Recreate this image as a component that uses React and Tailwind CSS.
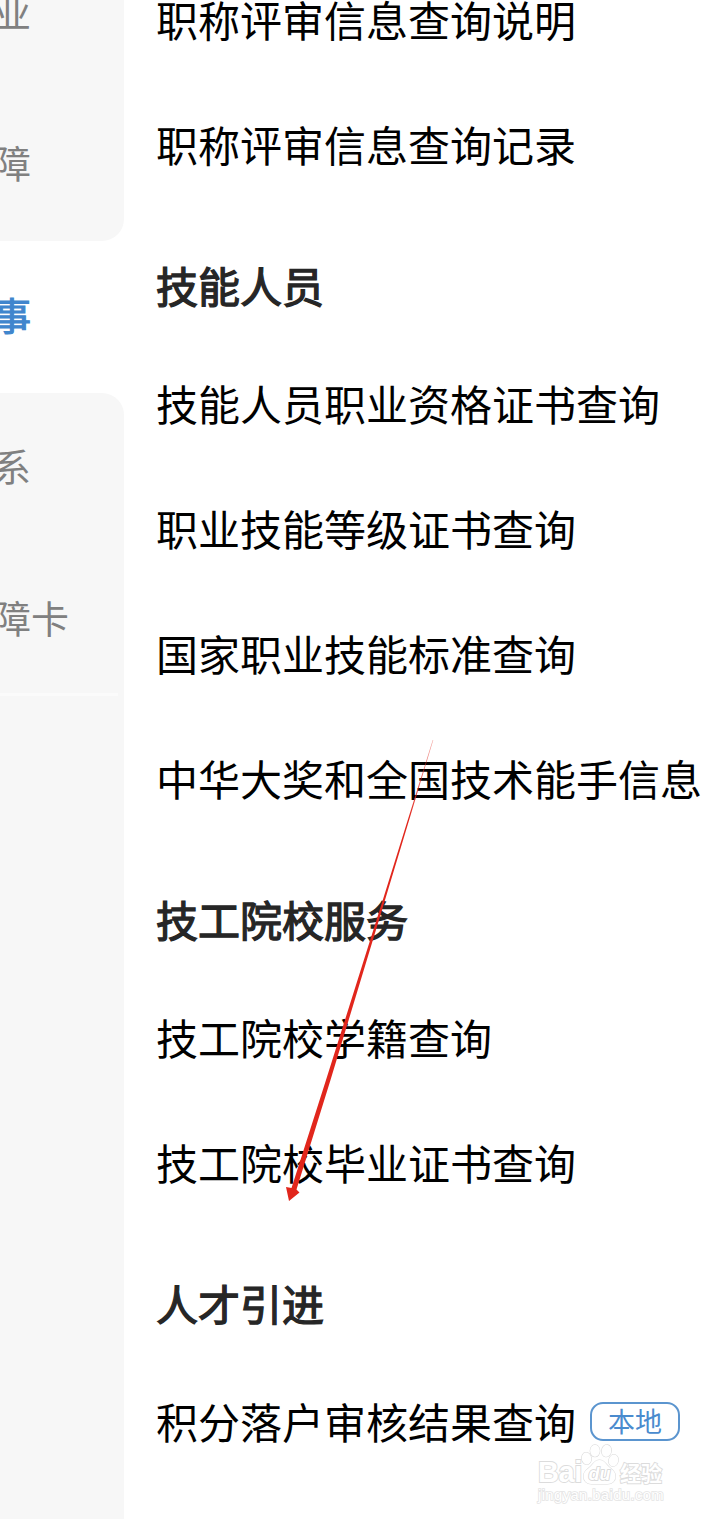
import React from 'react';

const tabsAbove = ["业", "障"];
const tabsBelow = ["系", "障卡"];

const sections = [
  {
    id: 1,
    title: null,
    items: ["职称评审信息查询说明", "职称评审信息查询记录"],
  },
  {
    id: 2,
    title: "技能人员",
    items: ["技能人员职业资格证书查询", "职业技能等级证书查询", "国家职业技能标准查询", "中华大奖和全国技术能手信息"],
  },
  {
    id: 3,
    title: "技工院校服务",
    items: ["技工院校学籍查询", "技工院校毕业证书查询"],
  },
  {
    id: 4,
    title: "人才引进",
    items: ["积分落户审核结果查询"],
    local: true,
  },
];

function Tab({ label, active }) {
  return (
    <div
      className={`flex h-[151.5px] shrink-0 items-center pb-[6px] text-[38px] leading-none whitespace-nowrap ${active ? "text-[#4086cd] [-webkit-text-stroke:1.2px_#4086cd]" : "text-[#808080]"}`}
    >
      <span className="ml-[-7px]">{label}</span>
    </div>
  );
}

function Sidebar() {
  return (
    <div className="flex w-[124px] shrink-0 flex-col">
      <div className="flex h-[241px] flex-col justify-end overflow-hidden rounded-br-[22px] bg-[#f7f7f7]">
        {tabsAbove.map((label) => (
          <Tab key={label} label={label} />
        ))}
      </div>
      <Tab label="事" active />
      <div className="flex-1 rounded-tr-[22px] bg-[#f7f7f7]">
        {tabsBelow.map((label) => (
          <Tab key={label} label={label} />
        ))}
        <div className="mt-[-3px] h-[3px] w-[118px] bg-[#fbfbfb]" />
      </div>
    </div>
  );
}

function Watermark() {
  return (
    <div className="absolute top-[1440px] left-[538px] flex h-[66px] w-[134px] flex-col font-['Liberation_Sans'] text-white [paint-order:stroke_fill]">
      <div className="flex h-[46px] items-end">
        <span className="w-[42px] text-[29px] leading-[27px] font-bold tracking-[-0.4px] [-webkit-text-stroke:1.8px_#dcdcdc]">Bai</span>
        <svg className="h-[42px] w-[39px] shrink-0" viewBox="0 0 39 42" fill="#fff" stroke="#dadada" strokeWidth="1.1">
          <ellipse cx="6.500" cy="14.500" rx="4.800" ry="6" transform="rotate(-10 6.500 14.500)" />
          <ellipse cx="15" cy="6.800" rx="4.800" ry="6" />
          <ellipse cx="26.500" cy="6.800" rx="4.800" ry="6" transform="rotate(10 26.500 6.800)" />
          <ellipse cx="33.500" cy="16.500" rx="4.700" ry="6" transform="rotate(14 33.500 16.500)" />
          <path d="M19.500 16c4.500 0 6 3.500 8.500 6 3 3 7.500 5 7.500 10 0 5-3.500 8-8 8h-16c-4.500 0-8-3-8-8 0-5 4.500-7 7.500-10 2.500-2.500 4-6 8.500-6z" />
          <text x="19.500" y="35.500" textAnchor="middle" fontFamily="Liberation Sans" fontSize="18" fontWeight="bold" fontStyle="italic" stroke="#d4d4d4" strokeWidth="1.600">du</text>
        </svg>
        <span className="ml-[1px] font-['Noto_Sans_CJK_SC'] text-[21px] leading-[27px] font-bold [-webkit-text-stroke:1.8px_#dcdcdc]">经验</span>
      </div>
      <span className="mt-[1px] text-[14.8px] leading-[17px] tracking-[0.4px] whitespace-nowrap [-webkit-text-stroke:1.6px_#e4e4e4]">jingyan.baidu.com</span>
    </div>
  );
}

function Arrow() {
  return (
    <svg className="pointer-events-none absolute top-[736px] left-[280px] h-[470px] w-[160px]" viewBox="280 736 160 470">
      <defs>
        <linearGradient id="tail" x1="433" y1="740" x2="408" y2="820" gradientUnits="userSpaceOnUse">
          <stop offset="0" stopColor="#e1261c" stopOpacity="0.4" />
          <stop offset="1" stopColor="#e1261c" />
        </linearGradient>
      </defs>
      <path d="M432.700 740L433.300 740L385 900L330.500 1080L296.500 1189.500L299.500 1192.500L289 1201L286 1187L291.500 1188L326 1080L382.800 900Z" fill="url(#tail)" />
    </svg>
  );
}

function App() {
  return (
    <div className="relative flex h-[1519px] w-[702px] overflow-hidden bg-white font-['Noto_Sans_CJK_SC',sans-serif]">
      <Sidebar />
      <div className="mt-[-43.5px] min-w-0 flex-1 pl-8">
        {sections.map((section) => (
          <div key={section.id}>
            {section.title && (
              <h2 className="flex h-[134px] items-center pt-[23px] text-[42px] leading-none font-normal text-[#262626] [-webkit-text-stroke:1.3px_#262626]">
                {section.title}
              </h2>
            )}
            {section.items.map((item) => (
              <div key={item} className="flex h-[125px] items-center text-[42px] leading-none whitespace-nowrap text-black">
                <span>{item}</span>
                {section.local && (
                  <span className="mt-[1px] ml-[14px] flex h-[39px] w-[90px] items-center justify-center rounded-[13px] border-2 border-[#5b95cf] pb-[3px] text-[27px] leading-none text-[#4a8bce]">
                    本地
                  </span>
                )}
              </div>
            ))}
          </div>
        ))}
      </div>
      <Arrow />
      <Watermark />
    </div>
  );
}

export default App;
